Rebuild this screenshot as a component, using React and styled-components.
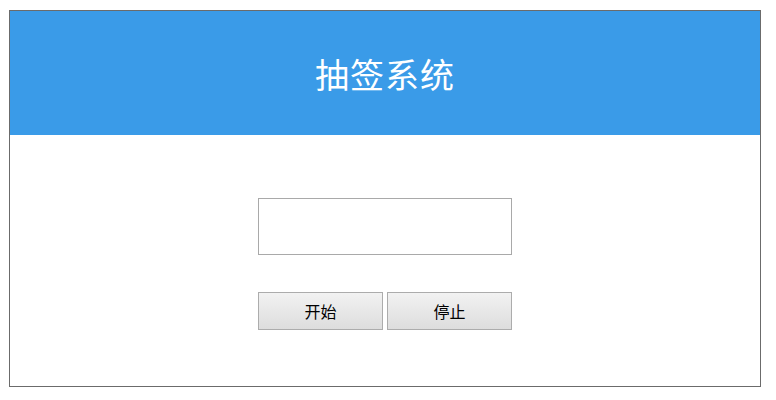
import styled, { createGlobalStyle } from "styled-components";

const GlobalStyle = createGlobalStyle`
    html, body {
        margin: 0;
        padding: 0;
        background: #fff;
    }
    body {
        padding: 10px 0 0 9px;
        font-family: "Noto Sans CJK SC", "Liberation Sans", sans-serif;
    }
`;

function App() {
    return (
        <>
            <GlobalStyle />
            <Wrapper>
                <Header>
                    <h1>抽签系统</h1>
                </Header>

                {/* DRAW AREA */}
                <Main>
                    <Result type="text" readOnly />
                    <Buttons>
                        <Button>开始</Button>
                        <Button>停止</Button>
                    </Buttons>
                </Main>
            </Wrapper>
        </>
    );
}

const Wrapper = styled.div`
    width: 752px;
    height: 377px;
    box-sizing: border-box;
    border: 1px solid #6b6b6b;
    display: flex;
    flex-direction: column;
`;

const Header = styled.header`
    height: 124px;
    background: #3a9be8;
    display: flex;
    align-items: center;
    justify-content: center;
    h1 {
        margin: 0;
        color: #fff;
        font-size: 34px;
        font-weight: 400;
        letter-spacing: 1px;
        line-height: 1;
        padding-top: 2px;
    }
`;

const Main = styled.section`
    display: flex;
    flex-direction: column;
    align-items: center;
    padding-top: 63px;
`;

const Result = styled.input`
    width: 254px;
    height: 57px;
    box-sizing: border-box;
    border: 1px solid #a9a9a9;
    background: #fff;
    outline: none;
    margin: 0;
`;

const Buttons = styled.div`
    display: flex;
    gap: 4px;
    margin-top: 37px;
`;

const Button = styled.button`
    width: 125px;
    height: 38px;
    box-sizing: border-box;
    border: 1px solid #acacac;
    border-radius: 0;
    background: linear-gradient(to bottom, #f2f2f2, #dddddd);
    color: #000;
    font-family: "Noto Sans CJK SC", "Liberation Sans", sans-serif;
    font-size: 16px;
    padding: 0;
    cursor: pointer;
`;

export default App;
